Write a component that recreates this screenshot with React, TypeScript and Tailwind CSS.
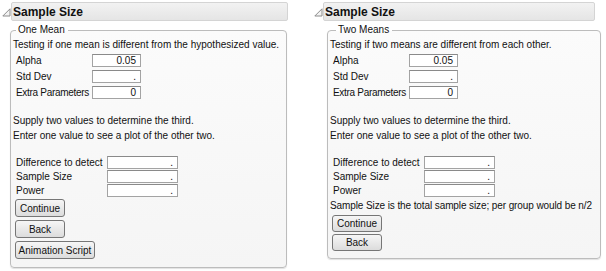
import React from "react";

const font = { fontFamily: '"Liberation Sans", Arial, sans-serif' };

function Tri() {
  return (
    <svg width="9" height="9" viewBox="0 0 9 9" className="block">
      <path d="M8 0.8 L8 8 L0.8 8 Z" fill="#f3f3f3" stroke="#8c8c8c" strokeWidth="1" />
    </svg>
  );
}

function Field({ value, w }: { value: string; w: string }) {
  return (
    <div
      className={`${w} h-[13px] shrink-0 border border-[#a3a3a3] border-t-[#8a8a8a] bg-white text-right pr-[4px] text-[10px] leading-[11px] text-[#111]`}
    >
      {value}
    </div>
  );
}

function Btn({ label, w, h }: { label: string; w: string; h: string }) {
  return (
    <div
      className={`${w} ${h} flex items-center justify-center rounded-[3px] border border-[#767676] bg-gradient-to-b from-[#f6f6f6] to-[#dcdcdc] text-[10px] text-[#111] whitespace-nowrap`}
    >
      {label}
    </div>
  );
}

function Row({ label, value, tight }: { label: string; value: string; tight?: boolean }) {
  return (
    <div className="flex items-center h-[13px] pl-[3px]">
      <div
        className={`w-[76px] shrink-0 whitespace-nowrap text-[10px] leading-[13px] ${tight ? "tracking-[-0.3px]" : ""}`}
      >
        {label}
      </div>
      <Field value={value} w="w-[49px]" />
    </div>
  );
}

function Row2({ label }: { label: string }) {
  return (
    <div className="flex items-center h-[13px] pl-[3px]">
      <div className="w-[91px] shrink-0 whitespace-nowrap text-[10px] leading-[13px]">{label}</div>
      <Field value="." w="w-[71px]" />
    </div>
  );
}

function Header() {
  return (
    <div className="h-[19px] flex-1 rounded-[2px] border border-[#d4d4d4] bg-gradient-to-b from-[#f2f2f2] to-[#e5e5e5] pl-[1px] flex items-center">
      <span className="text-[12px] font-bold leading-[14px] text-[#111]">Sample Size</span>
    </div>
  );
}

export default function App() {
  return (
    <div className="w-[606px] h-[271px] bg-white flex text-[#111] overflow-hidden" style={font}>
      {/* Left panel */}
      <div className="w-[290px] flex flex-col pt-[2px]">
        <div className="flex items-center pl-[2px] w-[288px]">
          <div className="w-[9px] mt-[2px]">
            <Tri />
          </div>
          <Header />
        </div>
        <fieldset className="ml-[10px] w-[277px] mt-[3px] rounded-[4px] border border-[#bcbcbc] bg-gradient-to-b from-[#fbfbfb] to-[#f5f5f5] pl-[2px] pb-[8px] shadow-[0_1px_1px_rgba(0,0,0,0.12)]">
          <legend className="ml-[3px] px-[2px] pr-[3px] text-[10px] leading-[12px]">One Mean</legend>
          <div className="flex flex-col">
            <div className="text-[10px] leading-[15px] mt-[1px] whitespace-nowrap">
              Testing if one mean is different from the hypothesized value.
            </div>
            <div className="flex flex-col gap-[3px] mt-[2px]">
              <Row label="Alpha" value="0.05" />
              <Row label="Std Dev" value="." />
              <Row label="Extra Parameters" value="0" tight />
            </div>
            <div className="mt-[14px] text-[10px] leading-[15px]">
              <div>Supply two values to determine the third.</div>
              <div>Enter one value to see a plot of the other two.</div>
            </div>
            <div className="flex flex-col gap-[1px] mt-[13px]">
              <Row2 label="Difference to detect" />
              <Row2 label="Sample Size" />
              <Row2 label="Power" />
            </div>
            <div className="flex flex-col gap-[3px] mt-[2px] pl-[2px]">
              <Btn label="Continue" w="w-[50px]" h="h-[18px]" />
              <Btn label="Back" w="w-[50px]" h="h-[18px]" />
              <Btn label="Animation Script" w="w-[80px]" h="h-[18px]" />
            </div>
          </div>
        </fieldset>
      </div>

      {/* Right panel */}
      <div className="w-[316px] flex flex-col pt-[2px] pl-[22px]">
        <div className="flex items-center pl-[2px] w-[283px]">
          <div className="w-[9px] mt-[2px]">
            <Tri />
          </div>
          <Header />
        </div>
        <fieldset className="ml-[15px] w-[274px] mt-[3px] rounded-[4px] border border-[#bcbcbc] bg-gradient-to-b from-[#fbfbfb] to-[#f5f5f5] pl-[2px] pb-[7px] shadow-[0_1px_1px_rgba(0,0,0,0.12)]">
          <legend className="ml-[6px] px-[2px] pr-[3px] text-[10px] leading-[12px]">Two Means</legend>
          <div className="flex flex-col">
            <div className="text-[10px] leading-[15px] mt-[1px] whitespace-nowrap">
              Testing if two means are different from each other.
            </div>
            <div className="flex flex-col gap-[3px] mt-[2px]">
              <Row label="Alpha" value="0.05" />
              <Row label="Std Dev" value="." />
              <Row label="Extra Parameters" value="0" tight />
            </div>
            <div className="mt-[14px] text-[10px] leading-[15px]">
              <div>Supply two values to determine the third.</div>
              <div>Enter one value to see a plot of the other two.</div>
            </div>
            <div className="flex flex-col gap-[1px] mt-[13px]">
              <Row2 label="Difference to detect" />
              <Row2 label="Sample Size" />
              <Row2 label="Power" />
            </div>
            <div className="text-[10px] leading-[15px] mt-[1px] whitespace-nowrap tracking-[-0.1px]">
              Sample Size is the total sample size; per group would be n/2
            </div>
            <div className="flex flex-col gap-[2px] mt-[2px] pl-[2px]">
              <Btn label="Continue" w="w-[50px]" h="h-[17px]" />
              <Btn label="Back" w="w-[50px]" h="h-[17px]" />
            </div>
          </div>
        </fieldset>
      </div>
    </div>
  );
}
